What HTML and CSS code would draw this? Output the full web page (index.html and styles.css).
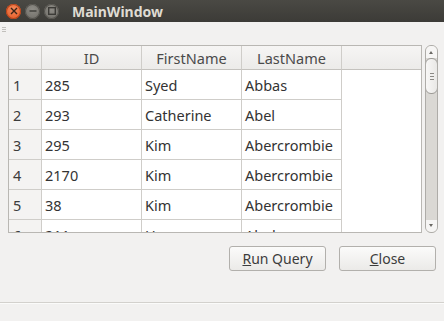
FILE: index.html
```html
<!DOCTYPE html>
<html lang="en">
<head>
	<meta charset="UTF-8">
	<title>MainWindow</title>
	<link rel="stylesheet" href="styles.css">
</head>
<body>
	<div class="window">
		<div class="titlebar">
			<div class="wm-buttons">
				<span class="wm wm-close">
					<svg width="8" height="8" viewBox="0 0 8 8"><path d="M1 1L7 7M7 1L1 7" stroke="#3a2418" stroke-width="1.4"/></svg>
				</span>
				<span class="wm wm-min">
					<svg width="8" height="8" viewBox="0 0 8 8"><path d="M0.5 4H7.5" stroke="#3c3b37" stroke-width="1.4"/></svg>
				</span>
				<span class="wm wm-max">
					<svg width="8" height="8" viewBox="0 0 8 8"><rect x="0.7" y="0.7" width="6.6" height="6.6" fill="none" stroke="#3c3b37" stroke-width="1.4"/></svg>
				</span>
			</div>
			<div class="title">MainWindow</div>
		</div>

		<div class="toolbar">
			<div class="handle"><i></i><i></i><i></i></div>
		</div>

		<div class="central">
			<div class="view">
				<div class="frame">
					<div class="grid">
						<div class="hcell corner"></div>
						<div class="hcell">ID</div>
						<div class="hcell">FirstName</div>
						<div class="hcell">LastName</div>
						<div class="hcell filler"></div>

						<div class="vcell">1</div><div class="cell">285</div><div class="cell">Syed</div><div class="cell">Abbas</div><div class="blank"></div>
						<div class="vcell">2</div><div class="cell">293</div><div class="cell">Catherine</div><div class="cell">Abel</div><div class="blank"></div>
						<div class="vcell">3</div><div class="cell">295</div><div class="cell">Kim</div><div class="cell">Abercrombie</div><div class="blank"></div>
						<div class="vcell">4</div><div class="cell">2170</div><div class="cell">Kim</div><div class="cell">Abercrombie</div><div class="blank"></div>
						<div class="vcell">5</div><div class="cell">38</div><div class="cell">Kim</div><div class="cell">Abercrombie</div><div class="blank"></div>
						<div class="vcell">6</div><div class="cell">211</div><div class="cell">Hazem</div><div class="cell">Abolrous</div><div class="blank"></div>
					</div>
				</div>
				<div class="scrollbar">
					<div class="arrow up"></div>
					<div class="thumb"><i></i><i></i><i></i></div>
					<div class="track"></div>
					<div class="arrow down"></div>
				</div>
			</div>

			<div class="buttons">
				<button class="btn"><u>R</u>un Query</button>
				<button class="btn"><u>C</u>lose</button>
			</div>
		</div>

		<div class="statusbar"></div>
	</div>
</body>
</html>
```

FILE: styles.css
```css
html, body {
	margin: 0;
	padding: 0;
}

body {
	background: #f2f1f0;
	font-family: "Noto Sans", "DejaVu Sans", sans-serif;
	font-size: 14px;
	color: #3c3c3c;
}

.window {
	width: 444px;
	height: 321px;
	display: flex;
	flex-direction: column;
	overflow: hidden;
}

/*/ Title bar /*/

.titlebar {
	height: 22px;
	flex: none;
	background: linear-gradient(#4a4944, #3c3b37);
	display: flex;
	align-items: center;
}

.wm-buttons {
	display: flex;
	gap: 4px;
	padding-left: 6px;
}

.wm {
	width: 15px;
	height: 15px;
	border-radius: 50%;
	display: flex;
	align-items: center;
	justify-content: center;
}

.wm-close {
	background: radial-gradient(circle at 50% 35%, #f58a5c, #e2541e);
	box-shadow: inset 0 0 0 1px #b6431a;
}

.wm-min, .wm-max {
	background: radial-gradient(circle at 50% 35%, #8e8c86, #6c6a64);
	box-shadow: inset 0 0 0 1px #55534e;
}

.title {
	margin-left: 13px;
	color: #dfdbd2;
	font-weight: bold;
	font-size: 14px;
}

/*/ Tool bar /*/

.toolbar {
	height: 23px;
	flex: none;
	padding: 5px 0 0 2px;
	box-sizing: border-box;
}

.handle {
	display: flex;
	flex-direction: column;
	gap: 1px;
}

.handle i {
	display: block;
	width: 4px;
	height: 1px;
	background: #c2c0bc;
}

/*/ Central /*/

.central {
	flex: 1;
	padding: 0 6px 0 8px;
}

.view {
	display: flex;
	gap: 3px;
	height: 188px;
}

.frame {
	width: 414px;
	box-sizing: border-box;
	border: 1px solid #b9b7b3;
	background: #ffffff;
	overflow: hidden;
}

.grid {
	display: grid;
	grid-template-columns: 33px 100px 100px 100px 1fr;
	grid-auto-rows: 30px;
	grid-template-rows: 24px;
	font-size: 14.5px;
}

.hcell {
	background: linear-gradient(#f6f5f4, #ecebe9);
	border-right: 1px solid #cfcdc9;
	border-bottom: 1px solid #c4c2be;
	display: flex;
	align-items: center;
	justify-content: center;
	color: #4a4a4a;
}

.hcell.filler {
	border-right: none;
}

.vcell {
	background: #f4f3f2;
	border-right: 1px solid #cfcdc9;
	border-bottom: 1px solid #cfcdc9;
	display: flex;
	align-items: center;
	padding: 1px 0 0 4px;
	box-sizing: border-box;
}

.cell {
	border-right: 1px solid #cfcdc9;
	border-bottom: 1px solid #cfcdc9;
	display: flex;
	align-items: center;
	padding: 0 0 0 3px;
	box-sizing: border-box;
	white-space: nowrap;
	color: #333333;
}

/*/ Scroll bar /*/

.scrollbar {
	width: 13px;
	box-sizing: border-box;
	border: 1px solid #aeaca8;
	border-radius: 6px;
	background: #dad8d4;
	display: flex;
	flex-direction: column;
	overflow: hidden;
}

.arrow {
	height: 12px;
	flex: none;
	background: #f6f5f4;
	position: relative;
}

.arrow::after {
	content: "";
	position: absolute;
	left: 3px;
	border-left: 2.5px solid transparent;
	border-right: 2.5px solid transparent;
}

.arrow.up::after {
	top: 5px;
	border-bottom: 3px solid #6a6864;
}

.arrow.down::after {
	top: 4px;
	border-top: 3px solid #6a6864;
}

.thumb {
	height: 34px;
	flex: none;
	margin: 0 -1px;
	border: 1px solid #9c9a96;
	border-radius: 6px;
	background: linear-gradient(90deg, #f8f7f6, #e9e8e6);
	display: flex;
	flex-direction: column;
	align-items: center;
	justify-content: center;
	gap: 2px;
}

.thumb i {
	display: block;
	width: 4px;
	height: 1px;
	background: #8a8884;
}

.track {
	flex: 1;
}

/*/ Buttons /*/

.buttons {
	display: flex;
	justify-content: flex-end;
	gap: 13px;
	margin-top: 13px;
	padding-right: 2px;
}

.btn {
	width: 97px;
	height: 25px;
	border: 1px solid #b2b0ac;
	border-radius: 3px;
	background: linear-gradient(#fbfbfa, #ebeae8);
	font-family: inherit;
	font-size: 14px;
	color: #3c3c3c;
	padding: 0;
}

/*/ Status bar /*/

.statusbar {
	height: 18px;
	flex: none;
	border-top: 1px solid #d3d1cd;
	box-shadow: inset 0 1px 0 #fbfbfa;
}
```
